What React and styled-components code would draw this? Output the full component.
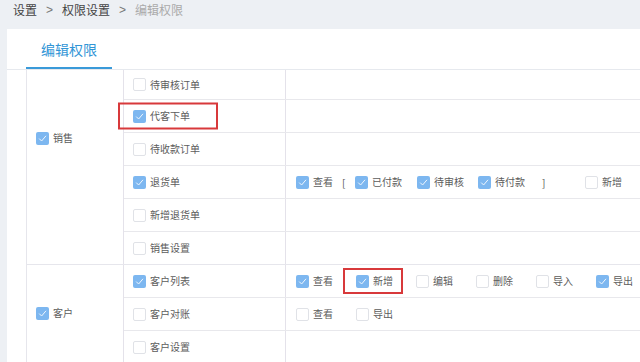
import React from 'react'
import styled, { createGlobalStyle } from 'styled-components'

const Global = createGlobalStyle`
    html, body {
        margin: 0;
        padding: 0;
        background: #edf0f4;
        font-family: "Noto Sans CJK SC", "Noto Sans", sans-serif;
        overflow: hidden;
    }
`

const Page = styled.div`
    width: 640px;
    height: 362px;
    display: flex;
    flex-direction: column;
`

const Crumbs = styled.div`
    height: 29px;
    box-sizing: border-box;
    padding: 3px 0 0 13px;
    display: flex;
    align-items: flex-start;
    font-size: 12px;
    line-height: 14px;
    color: #444;
`

const Sep = styled.span`
    margin: 0 9px;
    color: #777;
    font-family: "Liberation Sans", sans-serif;
`

const Current = styled.span`
    color: #aaa;
`

const Card = styled.div`
    flex: 1;
    margin-left: 7px;
    background: #fff;
    overflow: hidden;
`

const TabBar = styled.div`
    height: 41px;
    box-sizing: border-box;
    border-bottom: 1px solid #e6e9ee;
    padding-left: 19px;
    display: flex;
`

const Tab = styled.div`
    width: 86px;
    height: 40px;
    box-sizing: border-box;
    border-bottom: 2px solid #3a9ad9;
    display: flex;
    align-items: center;
    justify-content: center;
    padding-top: 2px;
    font-size: 14px;
    color: #3195d6;
`

const Table = styled.div`
    margin-left: 19px;
    width: 640px;
    font-size: 10px;
    color: #5c5c5c;
`

const Group = styled.div`
    display: flex;
    border-bottom: 1px solid #e6e6ec;
`

const GroupCell = styled.div`
    width: 98px;
    box-sizing: border-box;
    border-left: 1px solid #e6e6ec;
    border-right: 1px solid #e4e2ea;
    padding: ${p => p.$pad}px 0 0 9px;
    display: flex;
    align-items: flex-start;
`

const Rows = styled.div`
    flex: 1;
    display: flex;
    flex-direction: column;
`

const Row = styled.div`
    display: flex;
    height: ${p => (p.$short ? 29 : 32)}px;
    & + & {
        border-top: 1px solid #e8e8ec;
    }
`

const NameCell = styled.div`
    position: relative;
    width: 162px;
    box-sizing: border-box;
    border-right: 1px solid #e4e2ea;
    padding-left: 9px;
    display: flex;
    align-items: center;
`

const ActionCell = styled.div`
    flex: 1;
    padding-left: 10px;
    display: flex;
    align-items: center;
`

const Item = styled.div`
    position: relative;
    display: flex;
    align-items: center;
    width: ${p => (p.$w ? `${p.$w}px` : 'auto')};
    flex-shrink: 0;
`

const Bracket = styled.span`
    width: ${p => p.$w}px;
    flex-shrink: 0;
    color: #555;
`

const Box = styled.span`
    width: 13px;
    height: 13px;
    box-sizing: border-box;
    border-radius: 2px;
    flex-shrink: 0;
    display: flex;
    align-items: center;
    justify-content: center;
    background: ${p => (p.$on ? '#7db7f0' : '#fff')};
    border: ${p => (p.$on ? 'none' : '1px solid #e0e2e7')};
`

const Label = styled.span`
    margin-left: 4px;
    line-height: 12px;
    white-space: nowrap;
`

const Mark = styled.div`
    position: absolute;
    top: 50%;
    transform: translateY(-50%);
    left: ${p => p.$left}px;
    width: ${p => p.$w}px;
    height: ${p => p.$h}px;
    box-sizing: border-box;
    border: 2px solid #d8393b;
    pointer-events: none;
`

const Check = ({ on, children }) => (
    <>
        <Box $on={on}>
            {on && (
                <svg width="11" height="11" viewBox="0 0 11 11">
                    <polyline points="2.2,5.6 4.6,8 9,2.8" fill="none" stroke="#eef6fe" strokeWidth="1" />
                </svg>
            )}
        </Box>
        <Label>{children}</Label>
    </>
)

const App = () => {
    return (
        <Page>
            <Global />
            <Crumbs>
                <span>设置</span>
                <Sep>&gt;</Sep>
                <span>权限设置</span>
                <Sep>&gt;</Sep>
                <Current>编辑权限</Current>
            </Crumbs>
            <Card>
                <TabBar>
                    <Tab>编辑权限</Tab>
                </TabBar>
                <Table>
                    <Group>
                        <GroupCell $pad={62}>
                            <Check on>销售</Check>
                        </GroupCell>
                        <Rows>
                            <Row $short>
                                <NameCell><Check>待审核订单</Check></NameCell>
                                <ActionCell />
                            </Row>
                            <Row>
                                <NameCell>
                                    <Check on>代客下单</Check>
                                    <Mark $left={-6} $w={100} $h={27} />
                                </NameCell>
                                <ActionCell />
                            </Row>
                            <Row>
                                <NameCell><Check>待收款订单</Check></NameCell>
                                <ActionCell />
                            </Row>
                            <Row>
                                <NameCell><Check on>退货单</Check></NameCell>
                                <ActionCell>
                                    <Item $w={46}><Check on>查看</Check></Item>
                                    <Bracket $w={13}>[</Bracket>
                                    <Item $w={62}><Check on>已付款</Check></Item>
                                    <Item $w={61}><Check on>待审核</Check></Item>
                                    <Item $w={64}><Check on>待付款</Check></Item>
                                    <Bracket $w={43}>]</Bracket>
                                    <Item><Check>新增</Check></Item>
                                </ActionCell>
                            </Row>
                            <Row>
                                <NameCell><Check>新增退货单</Check></NameCell>
                                <ActionCell />
                            </Row>
                            <Row>
                                <NameCell><Check>销售设置</Check></NameCell>
                                <ActionCell />
                            </Row>
                        </Rows>
                    </Group>
                    <Group>
                        <GroupCell $pad={42}>
                            <Check on>客户</Check>
                        </GroupCell>
                        <Rows>
                            <Row>
                                <NameCell><Check on>客户列表</Check></NameCell>
                                <ActionCell>
                                    <Item $w={60}><Check on>查看</Check></Item>
                                    <Item $w={60}>
                                        <Check on>新增</Check>
                                        <Mark $left={-13} $w={60} $h={26} />
                                    </Item>
                                    <Item $w={60}><Check>编辑</Check></Item>
                                    <Item $w={60}><Check>删除</Check></Item>
                                    <Item $w={60}><Check>导入</Check></Item>
                                    <Item $w={60}><Check on>导出</Check></Item>
                                </ActionCell>
                            </Row>
                            <Row>
                                <NameCell><Check>客户对账</Check></NameCell>
                                <ActionCell>
                                    <Item $w={60}><Check>查看</Check></Item>
                                    <Item $w={60}><Check>导出</Check></Item>
                                </ActionCell>
                            </Row>
                            <Row>
                                <NameCell><Check>客户设置</Check></NameCell>
                                <ActionCell />
                            </Row>
                        </Rows>
                    </Group>
                </Table>
            </Card>
        </Page>
    )
}

export default App
